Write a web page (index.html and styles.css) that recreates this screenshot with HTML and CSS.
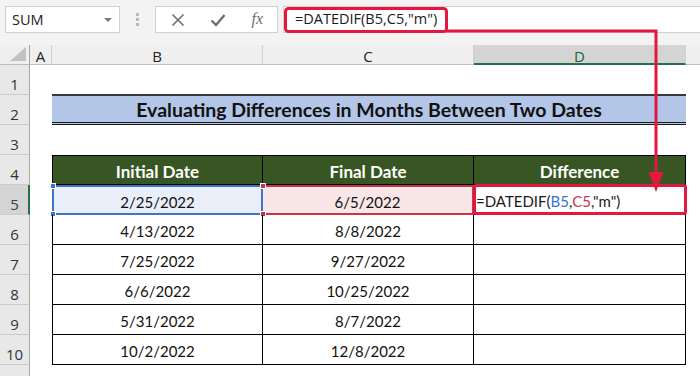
FILE: index.html
```html
<!DOCTYPE html>
<html>
<head>
<meta charset="utf-8">
<link rel="stylesheet" href="styles.css">
</head>
<body>
<div class="app">
  <div class="fbar">
    <div class="namebox">
      <span class="nb-text">SUM</span>
      <svg class="caret" width="8" height="5" viewBox="0 0 8 5"><path d="M0 0 L8 0 L4 4 Z" fill="#7a7a7a"/></svg>
    </div>
    <div class="grip"><i></i><i></i><i></i></div>
    <div class="fbtns">
      <svg width="14" height="14" viewBox="0 0 14 14"><path d="M1.5 1.5 L12.5 12.5 M12.5 1.5 L1.5 12.5" stroke="#6e6e6e" stroke-width="1.6" fill="none"/></svg>
      <svg width="16" height="14" viewBox="0 0 16 14"><path d="M1.5 7.5 L6 12 L14.5 2" stroke="#6e6e6e" stroke-width="2.4" fill="none"/></svg>
      <span class="fx">fx</span>
    </div>
    <div class="finput">=DATEDIF(B5,C5,"m")</div>
  </div>

  <div class="sheet">
    <div class="row hdr">
      <div class="rh corner"><svg width="16" height="14" viewBox="0 0 16 14"><path d="M16 0 L16 14 L0 14 Z" fill="#c2c2c2"/></svg></div>
      <div class="ch ca">A</div>
      <div class="ch cb">B</div>
      <div class="ch cc">C</div>
      <div class="ch cd sel">D</div>
      <div class="ch rest"></div>
    </div>

    <div class="row">
      <div class="rh">1</div>
      <div class="cell ca"></div><div class="cell cb"></div><div class="cell cc"></div><div class="cell cd"></div>
    </div>

    <div class="row">
      <div class="rh">2</div>
      <div class="cell ca"></div>
      <div class="cell title">Evaluating Differences in Months Between Two Dates</div>
    </div>

    <div class="row">
      <div class="rh">3</div>
      <div class="cell ca"></div>
    </div>

    <div class="row">
      <div class="rh">4</div>
      <div class="cell ca"></div>
      <div class="cell cb t th tl tt">Initial Date</div>
      <div class="cell cc t th tt">Final Date</div>
      <div class="cell cd t th tt">Difference</div>
    </div>

    <div class="row">
      <div class="rh rsel">5</div>
      <div class="cell ca"></div>
      <div class="cell cb t tl ref-b">2/25/2022<i class="hd hd-tl"></i><i class="hd hd-bl"></i></div>
      <div class="cell cc t ref-c">6/5/2022<i class="hd hd-tl"></i><i class="hd hd-bl"></i></div>
      <div class="cell cd t edit">=DATEDIF(<span class="rb">B5</span>,<span class="rc">C5</span>,"m")</div>
    </div>

    <div class="row">
      <div class="rh">6</div>
      <div class="cell ca"></div>
      <div class="cell cb t tl">4/13/2022</div>
      <div class="cell cc t">8/8/2022</div>
      <div class="cell cd t"></div>
    </div>

    <div class="row">
      <div class="rh">7</div>
      <div class="cell ca"></div>
      <div class="cell cb t tl">7/25/2022</div>
      <div class="cell cc t">9/27/2022</div>
      <div class="cell cd t"></div>
    </div>

    <div class="row">
      <div class="rh">8</div>
      <div class="cell ca"></div>
      <div class="cell cb t tl">6/6/2022</div>
      <div class="cell cc t">10/25/2022</div>
      <div class="cell cd t"></div>
    </div>

    <div class="row">
      <div class="rh">9</div>
      <div class="cell ca"></div>
      <div class="cell cb t tl">5/31/2022</div>
      <div class="cell cc t">8/7/2022</div>
      <div class="cell cd t"></div>
    </div>

    <div class="row">
      <div class="rh">10</div>
      <div class="cell ca"></div>
      <div class="cell cb t tl">10/2/2022</div>
      <div class="cell cc t">12/8/2022</div>
      <div class="cell cd t"></div>
    </div>

    <div class="row">
      <div class="rh"></div>
    </div>
  </div>

  <svg class="annot" width="700" height="376" viewBox="0 0 700 376">
    <rect x="285.5" y="8.5" width="161" height="23" rx="3" fill="none" stroke="#e3173f" stroke-width="3"/>
    <path d="M446 31 L656 31 L656 176" fill="none" stroke="#e3173f" stroke-width="3"/>
    <path d="M648.5 172 L663.5 172 L656 192 Z" fill="#e3173f"/>
    <rect x="474.5" y="185.5" width="211" height="28" rx="2" fill="none" stroke="#e3173f" stroke-width="3"/>
  </svg>
</div>
</body>
</html>
```

FILE: styles.css
```css
* { box-sizing: border-box; }
html, body { margin: 0; padding: 0; }
body {
  width: 700px;
  height: 376px;
  overflow: hidden;
  background: #f3f3f3;
  font-family: "Lato", "Open Sans", sans-serif;
  color: #111;
}
.app {
  position: relative;
  width: 700px;
  height: 376px;
  overflow: hidden;
}

/* formula bar */
.fbar {
  height: 45px;
  display: flex;
  align-items: flex-start;
  padding: 6px 0 0 5px;
}
.namebox {
  width: 115px;
  height: 27px;
  background: #fff;
  border: 1px solid #d0d0d0;
  display: flex;
  align-items: center;
  justify-content: space-between;
  padding: 0 7px 0 6px;
}
.nb-text {
  font-family: "Open Sans", sans-serif;
  font-size: 14.5px;
  color: #222;
}
.caret { margin-top: 1px; }
.grip {
  width: 35px;
  height: 27px;
  display: flex;
  flex-direction: column;
  align-items: center;
  justify-content: center;
  gap: 2px;
}
.grip i {
  display: block;
  width: 3px;
  height: 3px;
  background: #b8b8b8;
}
.fbtns {
  width: 123px;
  height: 27px;
  background: #fff;
  border: 1px solid #d0d0d0;
  display: flex;
  align-items: center;
  justify-content: space-between;
  padding: 0 14px 0 15px;
}
.fx {
  font-family: "Liberation Serif", serif;
  font-style: italic;
  font-size: 16px;
  color: #6e6e6e;
  margin-top: -2px;
}
.finput {
  flex: 1;
  height: 27px;
  margin-left: 5px;
  background: #fff;
  border: 1px solid #d0d0d0;
  border-right: none;
  padding: 2px 0 0 11px;
  font-family: "Open Sans", sans-serif;
  font-size: 14.5px;
  color: #1a1a1a;
}

/* sheet */
.sheet {
  background: #fff;
}
.row {
  display: flex;
  height: 30px;
}
.row.hdr {
  height: 20px;
  background: #efefef;
}
.rh {
  width: 30px;
  flex: none;
  background: #e8e8e8;
  border-right: 1px solid #a8a8a8;
  border-bottom: 1px solid #cbcbcb;
  display: flex;
  align-items: flex-end;
  justify-content: center;
  padding-bottom: 0;
  font-family: "Open Sans", sans-serif;
  font-size: 15px;
  color: #333;
}
.rh.rsel {
  background: #d4d4d4;
  border-right: 2px solid #217346;
  padding-left: 1px;
  color: #2c4a38;
}
.rh.corner {
  background: #efefef;
  align-items: flex-end;
  justify-content: flex-end;
  padding: 0 3px 3px 0;
  border-bottom: 1px solid #bdbdbd;
}
.ch {
  flex: none;
  height: 20px;
  border-right: 1px solid #d0d0d0;
  border-bottom: 1px solid #bdbdbd;
  display: flex;
  align-items: center;
  justify-content: center;
  font-family: "Open Sans", sans-serif;
  font-size: 15px;
  color: #222;
  padding-top: 3px;
}
.ch.sel {
  background: #d4d4d4;
  border-bottom: 2px solid #217346;
  color: #1f5d3a;
}
.ch.rest {
  flex: 1;
  border-right: none;
}
.ca { width: 22px; flex: none; }
.cb { width: 211px; flex: none; }
.cc { width: 211px; flex: none; }
.cd { width: 212px; flex: none; }

.cell {
  height: 30px;
  display: flex;
  align-items: center;
  justify-content: center;
  position: relative;
}
.title {
  width: 634px;
  flex: none;
  margin-top: -1px;
  height: 31px;
  background: #b4c6e7;
  border-top: 2px solid #3a3a3a;
  border-bottom: 3px double #1a1a1a;
  font-weight: 700;
  font-size: 19.5px;
  color: #111;
  padding-top: 1px;
}
.t {
  border-right: 1px solid #000;
  border-bottom: 1px solid #000;
  font-size: 15px;
  padding-top: 3px;
  color: #111;
}
.tl { border-left: 1px solid #000; }
.tt { border-top: 1px solid #000; }
.th {
  background: #375623;
  color: #fff;
  font-weight: 700;
  font-size: 17px;
  border-right-color: #000;
}
.ref-b {
  background: #e9eef8;
  border: 2px solid #3d73c9;
}
.ref-c {
  background: #f9e7e8;
  border-top: 2px solid #c93447;
  border-bottom: 2px solid #c93447;
  border-left: none;
  border-right: 2px solid #c93447;
}
.hd {
  position: absolute;
  width: 6px;
  height: 6px;
  border: 1px solid #fff;
  left: -4px;
}
.ref-b .hd { background: #3d73c9; }
.ref-c .hd { background: #c93447; left: -3px; }
.hd-tl { top: -4px; }
.hd-bl { bottom: -4px; }
.edit {
  justify-content: flex-start;
  padding-left: 2px;
  font-size: 15px;
  color: #1a1a1a;
}
.rb { color: #3d73c9; }
.rc { color: #c93447; }

.annot {
  position: absolute;
  left: 0;
  top: 0;
  pointer-events: none;
}
```
